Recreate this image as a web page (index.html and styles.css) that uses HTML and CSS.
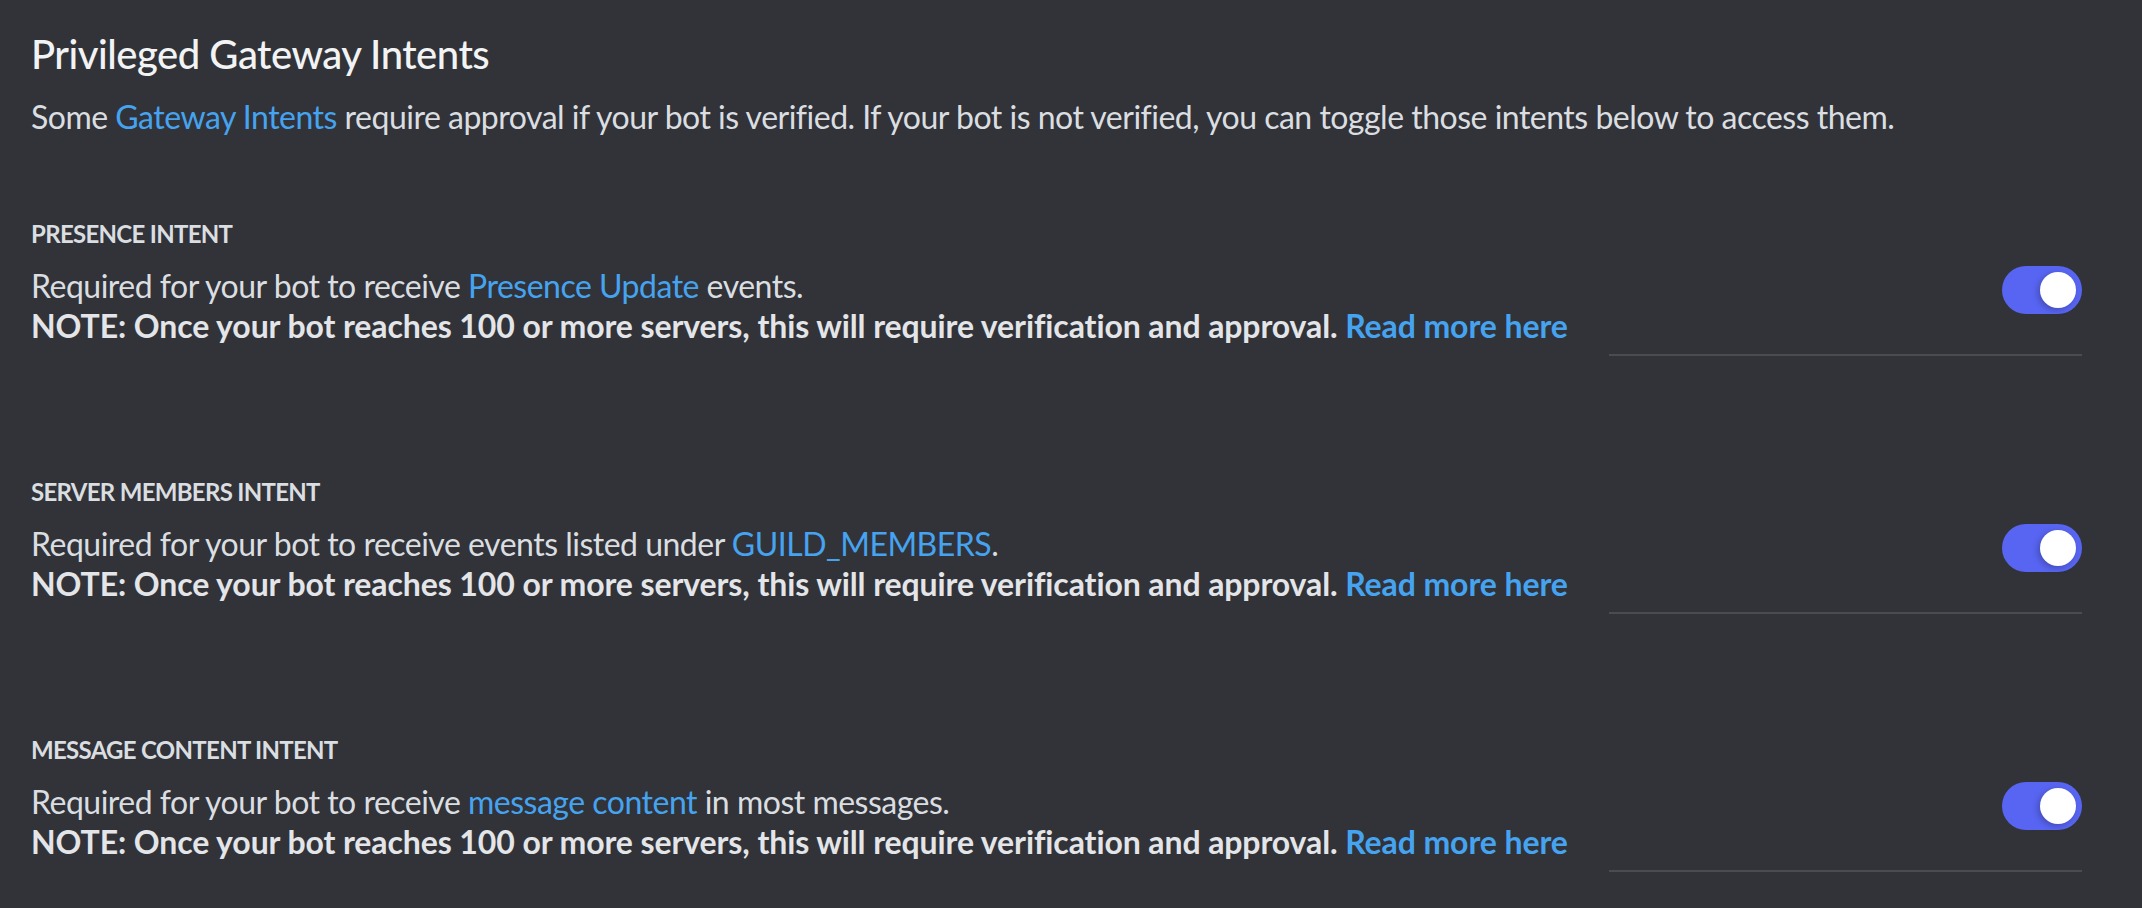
FILE: index.html
```html
<!DOCTYPE html>
<html lang="en">
<head>
<meta charset="utf-8">
<title>Privileged Gateway Intents</title>
<link rel="stylesheet" href="styles.css">
</head>
<body>
<main class="page">
  <h1 class="title">Privileged Gateway Intents</h1>
  <p class="lead">Some <a class="link" href="#">Gateway Intents</a> require approval if your bot is verified. If your bot is not verified, you can toggle those intents below to access them.</p>

  <section class="intent">
    <h3 class="intent-title">PRESENCE INTENT</h3>
    <div class="intent-row">
      <div class="intent-text">
        <p class="desc">Required for your bot to receive <a class="link" href="#">Presence Update</a> events.</p>
        <p class="note">NOTE: Once your bot reaches 100 or more servers, this will require verification and approval. <a class="link" href="#">Read more here</a></p>
      </div>
      <span class="toggle"><span class="knob"></span></span>
    </div>
    <div class="divider"></div>
  </section>

  <section class="intent">
    <h3 class="intent-title">SERVER MEMBERS INTENT</h3>
    <div class="intent-row">
      <div class="intent-text">
        <p class="desc">Required for your bot to receive events listed under <a class="link" href="#">GUILD_MEMBERS</a>.</p>
        <p class="note">NOTE: Once your bot reaches 100 or more servers, this will require verification and approval. <a class="link" href="#">Read more here</a></p>
      </div>
      <span class="toggle"><span class="knob"></span></span>
    </div>
    <div class="divider"></div>
  </section>

  <section class="intent">
    <h3 class="intent-title">MESSAGE CONTENT INTENT</h3>
    <div class="intent-row">
      <div class="intent-text">
        <p class="desc">Required for your bot to receive <a class="link" href="#">message content</a> in most messages.</p>
        <p class="note">NOTE: Once your bot reaches 100 or more servers, this will require verification and approval. <a class="link" href="#">Read more here</a></p>
      </div>
      <span class="toggle"><span class="knob"></span></span>
    </div>
    <div class="divider"></div>
  </section>
</main>
</body>
</html>
```
FILE: styles.css
```css
html, body {
  margin: 0;
  padding: 0;
  background: #313338;
}
body {
  font-family: Lato, "Noto Sans", sans-serif;
  color: #dbdee1;
  height: 908px;
  overflow: hidden;
}
.page {
  padding: 30px 60px 0 31px;
}
.title {
  margin: 0;
  font-size: 40px;
  line-height: 48px;
  font-weight: 500;
  color: #f2f3f5;
  letter-spacing: -0.5px;
}
.lead {
  margin: 19px 0 0;
  font-size: 32px;
  line-height: 40px;
  letter-spacing: -0.5px;
}
.link {
  color: #46a3f0;
  text-decoration: none;
}
.intent {
  margin-top: 81px;
}
.intent + .intent {
  margin-top: 120px;
}
.intent-title {
  margin: 0;
  font-size: 24px;
  line-height: 32px;
  font-weight: 700;
  color: #dbdee1;
  letter-spacing: -0.7px;
}
.intent-row {
  display: flex;
  align-items: flex-start;
  justify-content: space-between;
  margin-top: 16px;
}
.desc, .note {
  margin: 0;
  font-size: 32px;
  line-height: 40px;
  letter-spacing: -0.5px;
}
.note {
  font-weight: 700;
  color: #e3e5e8;
  letter-spacing: -0.1px;
}
.toggle {
  flex: none;
  position: relative;
  width: 80px;
  height: 48px;
  border-radius: 24px;
  background: #5865f2;
}
.knob {
  position: absolute;
  top: 6px;
  right: 6px;
  width: 36px;
  height: 36px;
  border-radius: 50%;
  background: #ffffff;
  box-shadow: -2px 2px 6px rgba(0, 0, 0, 0.25);
}
.divider {
  width: 473px;
  height: 2px;
  margin: 8px 0 0 auto;
  background: #4a4c53;
}
```
